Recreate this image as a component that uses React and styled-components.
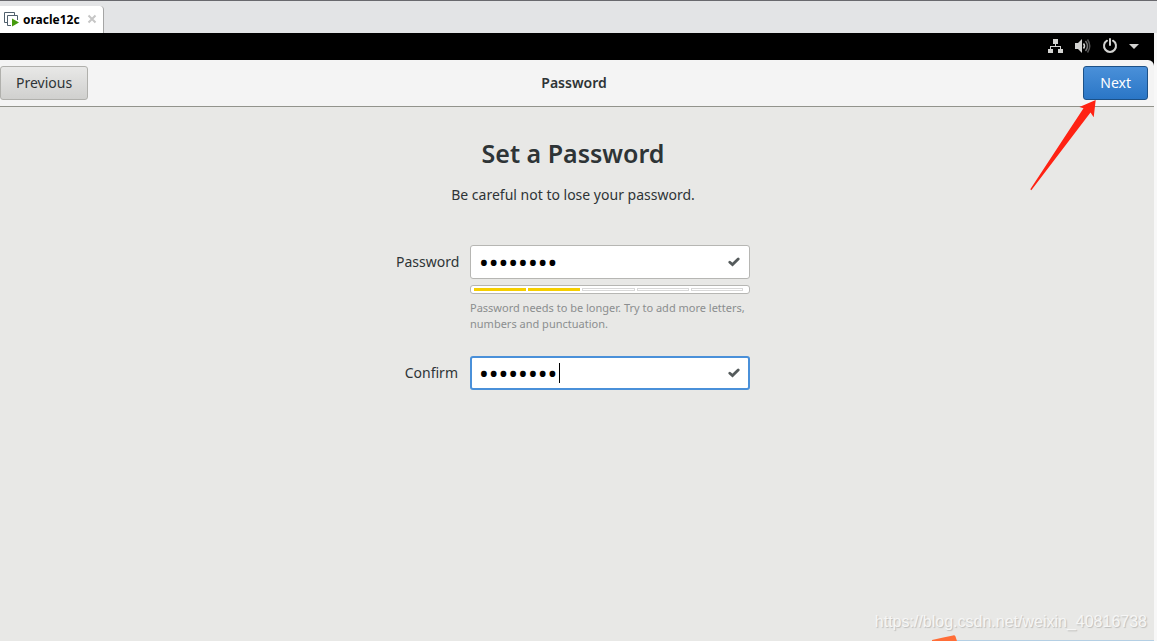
import { useState } from "react";
import styled, { createGlobalStyle } from "styled-components";

const GlobalStyle = createGlobalStyle`
  * {
    box-sizing: border-box;
  }
  body {
    margin: 0;
    font-family: "Noto Sans", "Open Sans", sans-serif;
    font-size: 14px;
    color: #2e3436;
  }
`;

const App = () => {
  const [password, setPassword] = useState("oracle12");
  const [confirm, setConfirm] = useState("oracle12");

  return (
    <Window>
      <GlobalStyle />
      <TabBar>
        <Tab>
          <MachineIcon />
          <TabName>oracle12c</TabName>
          <CloseButton aria-label="Close tab">
            <svg width="10" height="10" viewBox="0 0 10 10">
              <path d="M1.5 1.5l7 7M8.5 1.5l-7 7" stroke="#c6c6c6" strokeWidth="2" />
            </svg>
          </CloseButton>
        </Tab>
      </TabBar>
      <Screen>
        <TopBar>
          <NetworkIcon />
          <VolumeIcon />
          <PowerIcon />
          <CaretDownIcon />
        </TopBar>
        <Header>
          <Button>Previous</Button>
          <HeaderTitle>Password</HeaderTitle>
          <Button $primary>Next</Button>
        </Header>
        <Content>
          <Title>Set a Password</Title>
          <Subtitle>Be careful not to lose your password.</Subtitle>
          <Form>
            <Label htmlFor="password">Password</Label>
            <Field>
              <Input
                id="password"
                type="password"
                value={password}
                onChange={(e) => setPassword(e.target.value)}
              />
              <CheckIcon />
            </Field>
            <Strength>
              {[1, 2, 3, 4, 5].map((level) => (
                <Block key={level} $filled={level <= 2} />
              ))}
            </Strength>
            <Hint>
              Password needs to be longer. Try to add more letters, numbers and punctuation.
            </Hint>
            <Label htmlFor="confirm">Confirm</Label>
            <Field>
              <Input
                id="confirm"
                type="password"
                $active
                value={confirm}
                onChange={(e) => setConfirm(e.target.value)}
              />
              <TextCursor />
              <CheckIcon />
            </Field>
          </Form>
        </Content>
        <Arrow width="68" height="94" viewBox="0 0 68 94">
          <path d="M66.7 2L50.5 9l4 1.3L1.3 91.3l1 .9L61.5 14.5l3.2 4.7z" fill="#ff2213" />
        </Arrow>
        <Watermark>https://blog.csdn.net/weixin_40816738</Watermark>
        <Popup>
          <svg width="25" height="6" viewBox="0 0 25 6">
            <path d="M0 5Q12 2 21 .4Q23 0 23.5 1.5L25 6H0z" fill="#ff6d37" />
          </svg>
          <PopupEdge />
        </Popup>
      </Screen>
    </Window>
  );
};

const MachineIcon = () => (
  <svg width="15" height="15" viewBox="0 0 15 15" fill="none">
    <path d="M3 10.5H.5v-10h10V3" stroke="#50606d" />
    <path d="M7 13.5H3.5v-10h10V8" stroke="#50606d" />
    <path d="M8 6.5l7 4-7 4z" fill="#459a0c" />
  </svg>
);

const NetworkIcon = () => (
  <svg width="16" height="16" viewBox="0 0 16 16">
    <path d="M5 1h5v5H5zM0 11h5v4H0zM10 11h5v4h-5zM7 6h1v2H7zM2 8h11v3h-1V9H3v2H2z" fill="#d3d3d1" />
  </svg>
);

const VolumeIcon = () => (
  <svg width="16" height="16" viewBox="0 0 16 16" fill="none">
    <path d="M0 5h3l4-4v14l-4-4H0z" fill="#d3d3d1" />
    <path d="M8.5 5.5q2 2.5 0 5" stroke="#d3d3d1" strokeWidth="1.5" />
    <path d="M10.5 3q4 5 0 10" stroke="#777" strokeWidth="1.5" />
    <path d="M12.5 1.5q4.5 6.5 0 13" stroke="#555" strokeWidth="1.5" />
  </svg>
);

const PowerIcon = () => (
  <svg width="16" height="16" viewBox="0 0 16 16" fill="none">
    <path d="M5 2.7a6 6 0 1 0 6 0" stroke="#d3d3d1" strokeWidth="2" strokeLinecap="round" />
    <path d="M8 1v6" stroke="#d3d3d1" strokeWidth="2" strokeLinecap="round" />
  </svg>
);

const CaretDownIcon = () => (
  <svg width="10" height="16" viewBox="0 0 10 16">
    <path d="M0 6h10L5 11z" fill="#d3d3d1" />
  </svg>
);

const CheckIcon = () => (
  <Check width="12" height="10" viewBox="0 0 12 10">
    <path d="M1.8 5.2l2.7 2.3L10.2 2" fill="none" stroke="#555b5c" strokeWidth="2.8" strokeLinecap="round" />
  </Check>
);

const Window = styled.div`
  display: flex;
  flex-direction: column;
  min-height: 100vh;
  background: #f8f8f8;
`;

const TabBar = styled.nav`
  display: flex;
  align-items: flex-end;
  height: 33px;
  border-top: 1px solid #69696e;
  background: #e3e4e6;
`;

const Tab = styled.div`
  display: flex;
  align-items: center;
  height: 27px;
  padding: 0 6px 0 4px;
  border-right: 1px solid #a5a5a5;
  border-top-right-radius: 4px;
  background: #fff;
`;

const TabName = styled.span`
  margin: 0 7px 0 4px;
  font-size: 12px;
  font-weight: bold;
  color: #000;
`;

const CloseButton = styled.button`
  display: flex;
  padding: 0 0 2px;
  border: none;
  background: none;
`;

const Screen = styled.main`
  position: relative;
  display: flex;
  flex: 1;
  flex-direction: column;
  margin-right: 3px;
  background: #e8e8e6;
`;

const TopBar = styled.div`
  display: flex;
  align-items: center;
  justify-content: flex-end;
  gap: 11px;
  height: 27px;
  padding: 0 15px 2px 0;
  background: #000;
`;

const Header = styled.header`
  display: grid;
  grid-template-columns: 1fr auto 1fr;
  align-items: center;
  height: 47px;
  padding-right: 6px;
  border-bottom: 1px solid #92938c;
  border-top-right-radius: 6px;
  background: #f4f4f4;
  box-shadow: 0 -6px 0 #000;
`;

const HeaderTitle = styled.h2`
  margin: 0;
  padding-bottom: 2px;
  font-size: 14px;
  font-weight: 600;
`;

const Button = styled.button`
  justify-self: ${(props) => (props.$primary ? "end" : "start")};
  height: 34px;
  padding: 0 ${(props) => (props.$primary ? 16 : 15)}px 2px;
  border: 1px solid ${(props) => (props.$primary ? "#1c5187" : "#b0b0ac")};
  border-radius: 3px;
  background: ${(props) =>
    props.$primary
      ? "linear-gradient(#4a90d9, #2a76c6)"
      : "linear-gradient(#e8e8e7, #d0d0ce)"};
  font-family: inherit;
  font-size: 14px;
  color: ${(props) => (props.$primary ? "#fff" : "#2e3436")};
`;

const Content = styled.section`
  display: flex;
  flex-direction: column;
  align-items: center;
  padding: 28px 8px 0 0;
`;

const Title = styled.h1`
  margin: 0;
  font-size: 25px;
  font-weight: 600;
  line-height: 36px;
`;

const Subtitle = styled.p`
  margin: 14px 0 40px;
  line-height: 20px;
`;

const Form = styled.form`
  display: grid;
  grid-template-columns: 62px 280px;
  column-gap: 12px;
  align-items: center;
`;

const Label = styled.label`
  padding-bottom: 2px;
  text-align: right;
`;

const Field = styled.div`
  position: relative;
`;

const Input = styled.input`
  display: block;
  width: 100%;
  height: 34px;
  padding: 0 32px 0 ${(props) => (props.$active ? 7 : 8)}px;
  border: ${(props) => (props.$active ? "2px solid #4a90d9" : "1px solid #b6b6b3")};
  border-radius: 3px;
  outline: none;
  background: #fff;
  font-family: "Noto Sans", sans-serif;
  font-size: 26px;
  color: #000;
`;

const Check = styled.svg`
  position: absolute;
  top: 12px;
  right: 10px;
`;

const TextCursor = styled.span`
  position: absolute;
  top: 7px;
  left: 89px;
  width: 1px;
  height: 20px;
  background: #000;
`;

const Strength = styled.div`
  display: flex;
  grid-column: 2;
  gap: 2px;
  height: 9px;
  margin-top: 6px;
  padding: 2px 6px 2px 3px;
  border: 1px solid #b6b6b3;
  border-radius: 3px;
  background: #fff;
`;

const Block = styled.span`
  flex: 1;
  height: 3px;
  border: 1px solid ${(props) => (props.$filled ? "#f5ce00" : "#d8d8d8")};
  background: ${(props) => (props.$filled ? "#f5ce00" : "#fff")};
`;

const Hint = styled.p`
  grid-column: 2;
  margin: 6px 0 24px;
  font-size: 11px;
  line-height: 16px;
  color: #8b8e8f;
`;

const Arrow = styled.svg`
  position: absolute;
  top: 65px;
  right: 57px;
  pointer-events: none;
`;

const Watermark = styled.div`
  margin: auto 7px 9px auto;
  font-family: "Liberation Sans", sans-serif;
  font-size: 16px;
  line-height: 20px;
  color: #f6f6f5;
  text-shadow: 1px 1px 1px #bdbdbb;
`;

const Popup = styled.div`
  position: absolute;
  right: 0;
  bottom: 0;
  display: flex;
  align-items: flex-end;
  width: 222px;
`;

const PopupEdge = styled.span`
  flex: 1;
  height: 1px;
  background: #b4cfe4;
`;

export default App;
